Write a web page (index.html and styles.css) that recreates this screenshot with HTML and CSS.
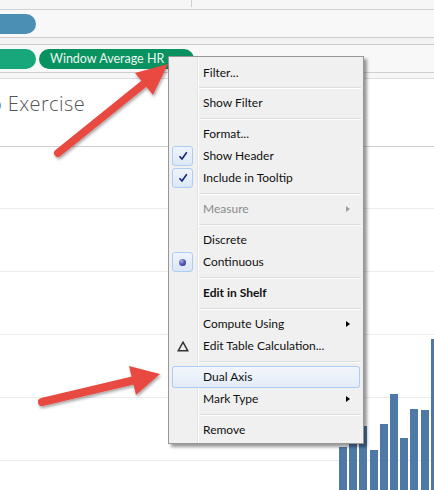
FILE: index.html
```html
<!DOCTYPE html>
<html>
<head>
<meta charset="utf-8">
<link rel="stylesheet" href="styles.css">
</head>
<body>
<div class="topbar"><div class="topseg"></div></div>
<div class="shelf">
  <span class="pill pill-blue"></span>
</div>
<div class="band"></div>
<div class="shelf">
  <span class="pill pill-green"></span>
  <span class="pill pill-dark">Window Average HR<span class="caret"></span></span>
</div>
<div class="band band2"></div>
<div class="view">
  <div class="title">o Exercise</div>
  <div class="chart">
    <div class="gridlines">
      <div class="gl gl-first"></div>
      <div class="gl"></div>
      <div class="gl"></div>
      <div class="gl"></div>
      <div class="gl"></div>
    </div>
    <div class="bars">
      <div class="bar" style="height:43px"></div>
      <div class="bar" style="height:58px"></div>
      <div class="bar" style="height:64px"></div>
      <div class="bar bar-shift" style="height:40px"></div>
      <div class="bar" style="height:66px"></div>
      <div class="bar" style="height:96px"></div>
      <div class="bar" style="height:52px"></div>
      <div class="bar" style="height:81px"></div>
      <div class="bar bar-shift" style="height:80px"></div>
      <div class="bar" style="height:151px"></div>
    </div>
  </div>
</div>

<div class="menu">
  <div class="mi first"><span class="ic"></span><span class="lbl">Filter...</span></div>
  <div class="msep"></div>
  <div class="mi"><span class="ic"></span><span class="lbl">Show Filter</span></div>
  <div class="msep"></div>
  <div class="mi"><span class="ic"></span><span class="lbl">Format...</span></div>
  <div class="mi"><span class="ic on"><svg width="10" height="10" viewBox="0 0 10 10"><path d="M1.5 5.2 L4 8 L8.8 1.2" fill="none" stroke="#16247a" stroke-width="1.6"/></svg></span><span class="lbl">Show Header</span></div>
  <div class="mi"><span class="ic on"><svg width="10" height="10" viewBox="0 0 10 10"><path d="M1.5 5.2 L4 8 L8.8 1.2" fill="none" stroke="#16247a" stroke-width="1.6"/></svg></span><span class="lbl">Include in Tooltip</span></div>
  <div class="msep"></div>
  <div class="mi disabled"><span class="ic"></span><span class="lbl">Measure</span><span class="sub sub-dis"></span></div>
  <div class="msep"></div>
  <div class="mi"><span class="ic"></span><span class="lbl">Discrete</span></div>
  <div class="mi"><span class="ic on"><span class="dot"></span></span><span class="lbl">Continuous</span></div>
  <div class="msep"></div>
  <div class="mi bold"><span class="ic"></span><span class="lbl">Edit in Shelf</span></div>
  <div class="msep"></div>
  <div class="mi"><span class="ic"></span><span class="lbl">Compute Using</span><span class="sub"></span></div>
  <div class="mi"><span class="ic"><svg width="12" height="11" viewBox="0 0 12 11"><path d="M6 1.2 L10.8 9.8 L1.2 9.8 Z" fill="none" stroke="#333" stroke-width="1.5" stroke-linejoin="miter"/></svg></span><span class="lbl">Edit Table Calculation...</span></div>
  <div class="msep"></div>
  <div class="mi hl"><span class="ic"></span><span class="lbl">Dual Axis</span></div>
  <div class="mi"><span class="ic"></span><span class="lbl">Mark Type</span><span class="sub"></span></div>
  <div class="msep"></div>
  <div class="mi"><span class="ic"></span><span class="lbl">Remove</span></div>
</div>

<svg class="arrows" width="434" height="490" viewBox="0 0 434 490">
  <defs>
    <filter id="sh" x="-20%" y="-20%" width="140%" height="140%">
      <feDropShadow dx="1" dy="2" stdDeviation="1.5" flood-color="#000" flood-opacity="0.35"/>
    </filter>
  </defs>
  <g filter="url(#sh)" fill="#e84a40" stroke="#e84a40">
    <line x1="58" y1="153" x2="146" y2="82" stroke-width="8" stroke-linecap="round"/>
    <polygon points="168,64 153,95 135,73" stroke="none"/>
    <line x1="42" y1="402" x2="135" y2="380" stroke-width="8" stroke-linecap="round"/>
    <polygon points="160,374 136,395 129,366" stroke="none"/>
  </g>
</svg>
</body>
</html>
```

FILE: styles.css
```css
html, body {
  margin: 0;
  padding: 0;
}
body {
  width: 434px;
  height: 490px;
  overflow: hidden;
  background: #fff;
  position: relative;
  font-family: Lato, "Open Sans", sans-serif;
}

.topbar {
  height: 9px;
  background: #f6f6f6;
  border-bottom: 1px solid #d2d2d2;
}
.topseg {
  width: 191px;
  height: 7px;
  border-right: 1px solid #cfcfcf;
}

.shelf {
  height: 27px;
  background: #f8f8f8;
  border-bottom: 1px solid #cdcdcd;
  display: flex;
  align-items: center;
  gap: 3px;
  overflow: hidden;
}
.band {
  height: 6px;
  background: #f3f3f3;
  border-bottom: 1px solid #cdcdcd;
}
.band2 {
  height: 5px;
  background: #f7f7f7;
  border-bottom: 1px solid #dcdcdc;
}

.pill {
  height: 20px;
  border-radius: 10px;
  display: flex;
  align-items: center;
  box-sizing: border-box;
  flex: none;
}
.pill-blue {
  width: 60px;
  margin-left: -24px;
  background: #4b8fb5;
}
.pill-green {
  width: 60px;
  margin-left: -24px;
  background: #17a77a;
}
.pill-dark {
  width: 155px;
  padding-left: 11px;
  background: #089260;
  color: #eaf6f0;
  font-family: Lato, "Open Sans", sans-serif;
  font-size: 12.5px;
}
.caret {
  width: 0;
  height: 0;
  margin-left: 8px;
  margin-top: -2px;
  border-left: 4px solid transparent;
  border-right: 4px solid transparent;
  border-top: 4px solid #eaf6f0;
}

.view {
  height: 411px;
  display: flex;
  flex-direction: column;
}
.title {
  height: 54px;
  padding-top: 13px;
  border-bottom: 1px solid #d0d0d0;
  font-family: "Open Sans", Lato, sans-serif;
  font-weight: 300;
  font-size: 20px;
  letter-spacing: 0.4px;
  line-height: 23px;
  color: #555555;
  margin-left: -10px;
  white-space: nowrap;
}
.chart {
  flex: 1;
  display: grid;
  overflow: hidden;
}
.gridlines, .bars {
  grid-area: 1 / 1;
}
.gl {
  height: 62px;
  border-bottom: 1px solid #ececec;
}
.gl-first {
  height: 61px;
}
.bars {
  display: flex;
  align-items: flex-end;
  gap: 2px;
  padding-left: 339px;
}
.bar {
  width: 8px;
  flex: none;
  background: #4e79a7;
}
.bar-shift {
  margin-left: 1px;
}

/* context menu */
.menu {
  position: absolute;
  left: 168px;
  top: 56px;
  width: 196px;
  height: 388px;
  box-sizing: border-box;
  border: 1px solid #979797;
  padding: 5px 0 2px;
  background:
    linear-gradient(to right, transparent 28px, #e2e3e3 28px, #e2e3e3 29px, #ffffff 29px, #ffffff 30px, transparent 30px),
    #f0f0f0;
  box-shadow: 3px 3px 3px rgba(0, 0, 0, 0.4);
  font-family: Lato, "Open Sans", sans-serif;
  font-size: 12px;
  color: #111111;
}
.mi {
  height: 22px;
  margin: 0 3px;
  display: flex;
  align-items: center;
  border-radius: 3px;
}
.mi.first {
  height: 21px;
}
.mi.disabled {
  color: #8a8a8a;
}
.mi.bold {
  font-weight: 700;
}
.mi.hl {
  box-shadow: inset 0 0 0 1px #aecdf2;
  background: linear-gradient(#f3f7fc, #e2ebf7);
}
.ic {
  width: 21px;
  height: 20px;
  margin-right: 10px;
  box-sizing: border-box;
  display: flex;
  align-items: center;
  justify-content: center;
  flex: none;
}
.ic.on {
  border: 1px solid #aecdf2;
  border-radius: 3px;
  background: linear-gradient(#eef4fc, #dce7f6);
}
.dot {
  width: 7px;
  height: 7px;
  border-radius: 50%;
  background: radial-gradient(circle at 35% 30%, #a9aee6 0%, #5a60b8 45%, #1f2470 100%);
}
.lbl {
  white-space: nowrap;
  margin-top: -1px;
}
.sub {
  margin-left: auto;
  margin-right: 10px;
  width: 0;
  height: 0;
  border-top: 3.5px solid transparent;
  border-bottom: 3.5px solid transparent;
  border-left: 4px solid #000;
}
.sub-dis {
  border-left-color: #a0a0a0;
}
.msep {
  height: 9px;
  margin-left: 30px;
  margin-right: 2px;
  background: linear-gradient(transparent 4px, #dcdcdc 4px, #dcdcdc 5px, #ffffff 5px, #ffffff 6px, transparent 6px);
}

.arrows {
  position: absolute;
  left: 0;
  top: 0;
  pointer-events: none;
}
```
